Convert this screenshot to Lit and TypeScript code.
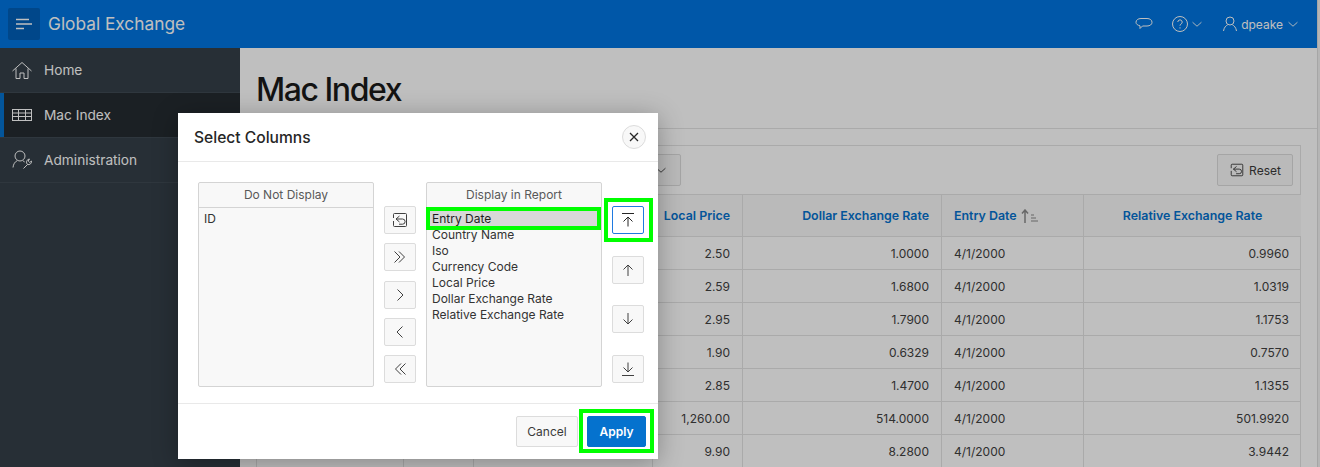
import { LitElement, css, html, svg } from "lit";
import { customElement } from "lit/decorators.js";

const rows = [
    ["2.50", "1.0000", "0.9960"],
    ["2.59", "1.6800", "1.0319"],
    ["2.95", "1.7900", "1.1753"],
    ["1.90", "0.6329", "0.7570"],
    ["2.85", "1.4700", "1.1355"],
    ["1,260.00", "514.0000", "501.9920"],
    ["9.90", "8.2800", "3.9442"],
];

const icon = (body: unknown, size = 18, box = 18) => html`<svg
    width=${size}
    height=${size}
    viewBox="0 0 ${box} ${box}"
    fill="none"
    stroke="currentColor"
    stroke-width="1"
>
    ${body}
</svg>`;

const chevron = svg`<path d="M4 7l5 4.500L14 7" />`;
const resetIcon = svg`<path d="M2.500 7V3.500a1 1 0 0 1 1-1h11a1 1 0 0 1 1 1v11a1 1 0 0 1-1 1h-11a1 1 0 0 1-1-1V10" /><path d="M8.500 5 5 8l3.500 3M5 8h6.500a2.600 2.600 0 0 1 0 5.200H8" />`;
const dblRight = svg`<path d="M3.500 3.500 9 9l-5.500 5.500M8 3.500 13.500 9 8 14.500" />`;
const dblLeft = svg`<path d="M14.500 3.500 9 9l5.500 5.500M10 3.500 4.500 9l5.500 5.500" />`;
const right = svg`<path d="M6.500 3.500 12 9l-5.500 5.500" />`;
const left = svg`<path d="M11.500 3.500 6 9l5.500 5.500" />`;
const top = svg`<path d="M3 2.500h12M9 15.500V6M4.500 10.500 9 6l4.500 4.500" />`;
const up = svg`<path d="M9 15V4M4.500 8.500 9 4l4.500 4.500" />`;
const down = svg`<path d="M9 3v11M4.500 9.500 9 14l4.500-4.500" />`;
const bottom = svg`<path d="M3 15.500h12M9 2.500V12M4.500 7.500 9 12l4.500-4.500" />`;

@customElement("app-root")
export class AppRoot extends LitElement {
    static styles = css`
        :host {
            display: block;
            font-family: Inter, "Liberation Sans", sans-serif;
        }
        .page {
            position: relative;
            width: 1320px;
            height: 467px;
            overflow: hidden;
            background: #fff;
            color: #262626;
            font-size: 12px;
        }
        .topbar {
            height: 48px;
            background: #0075e0;
            color: #fff;
            display: flex;
            align-items: center;
            padding: 0 19px 0 8px;
            box-sizing: border-box;
        }
        .burger {
            width: 32px;
            height: 32px;
            border-radius: 2px;
            background: #005fb8;
            display: flex;
            align-items: center;
            justify-content: center;
        }
        .brand {
            margin-left: 8px;
            padding-bottom: 2px;
            font-size: 17.300px;
            flex: 1;
        }
        .tools {
            display: flex;
            align-items: center;
            font-size: 12px;
        }
        .tools svg {
            display: block;
        }
        .space-18 {
            width: 18px;
        }
        .space-16 {
            width: 16px;
        }
        .space-2 {
            width: 2px;
        }
        .body {
            display: flex;
            height: 419px;
        }
        .side {
            width: 240px;
            flex: none;
            background: #343f48;
            color: #fff;
            font-size: 13.700px;
        }
        .nav {
            height: 44px;
            border-bottom: 1px solid #3f4a53;
            display: flex;
            align-items: center;
            gap: 12px;
            padding-left: 12px;
        }
        .nav.active {
            background: #252b30;
            box-shadow: inset 4px 0 0 #0572ce;
        }
        .main {
            flex: 1;
            min-width: 0;
            display: flex;
            flex-direction: column;
        }
        .title {
            height: 78px;
            padding-top: 2px;
            flex: none;
            border-bottom: 1px solid #e3e3e3;
            padding-left: 16px;
            display: flex;
            align-items: center;
            font-size: 32px;
            font-weight: 500;
            letter-spacing: -1.450px;
            color: #1a1a1a;
        }
        .region {
            margin: 16px 0 0 16px;
            width: 1045px;
            border: 1px solid #e3e3e3;
            border-bottom: 0;
            flex: 1;
            box-sizing: border-box;
        }
        .toolbar {
            height: 48px;
            display: flex;
            align-items: center;
            justify-content: flex-end;
            padding-right: 7px;
            box-sizing: border-box;
            position: relative;
        }
        .btn {
            height: 32px;
            box-sizing: border-box;
            border: 1px solid #dcdcdc;
            background: #f8f8f8;
            border-radius: 2px;
            display: flex;
            align-items: center;
            justify-content: center;
            color: #3a3a3a;
        }
        .reset {
            width: 76px;
            gap: 4px;
        }
        .actions {
            position: absolute;
            left: 340px;
            top: 8px;
            width: 84px;
            justify-content: flex-end;
            padding-right: 11px;
        }
        .grid {
            display: grid;
            grid-template-columns: 146px 70px 179px 90px 199px 142px 218px;
            border-top: 1px solid #e3e3e3;
        }
        .cell {
            height: 33px;
            box-sizing: border-box;
            display: flex;
            align-items: center;
            justify-content: flex-end;
            padding: 0 12px;
            border-bottom: 1px solid #e3e3e3;
            border-left: 1px solid #e3e3e3;
            color: #404040;
            white-space: nowrap;
        }
        .cell:nth-child(7n + 1) {
            border-left: 0;
        }
        .head {
            height: 42px;
            background: #f8f8f8;
            color: #0572ce;
            font-weight: 600;
            font-size: 12.400px;
        }
        .start {
            justify-content: flex-start;
            gap: 4px;
        }
        .center {
            justify-content: center;
        }
        .edge {
            position: absolute;
            right: 0;
            top: 0;
            bottom: 0;
            width: 2px;
            background: #f2f2f2;
            border-left: 1px solid #dedede;
        }
        .shade {
            position: absolute;
            inset: 0;
            background: rgba(0, 0, 0, 0.25);
        }
        .dialog {
            position: absolute;
            left: 178px;
            top: 113px;
            width: 480px;
            height: 346px;
            background: #fff;
            box-shadow: 0 4px 24px rgba(0, 0, 0, 0.3);
            display: flex;
            flex-direction: column;
        }
        .dlg-head {
            height: 49px;
            flex: none;
            box-sizing: border-box;
            border-bottom: 1px solid #e9e9e9;
            padding: 0 12px 0 16px;
            display: flex;
            align-items: center;
            justify-content: space-between;
            font-size: 15.600px;
            font-weight: 500;
            color: #262626;
        }
        .close {
            width: 24px;
            height: 24px;
            border-radius: 50%;
            box-sizing: border-box;
            border: 1px solid #dcdcdc;
            background: #f8f8f8;
            display: flex;
            align-items: center;
            justify-content: center;
            color: #262626;
        }
        .dlg-body {
            flex: 1;
            padding: 20px 20px 0;
            display: flex;
            align-items: flex-start;
        }
        .list {
            width: 176px;
            height: 205px;
            box-sizing: border-box;
            border: 1px solid #d4d4d4;
            border-radius: 2px;
            background: #f8f8f8;
            flex: none;
        }
        .list-head {
            height: 25px;
            box-sizing: border-box;
            padding-bottom: 2px;
            display: flex;
            align-items: center;
            justify-content: center;
            color: #595959;
        }
        .list-head.rule {
            border-bottom: 1px solid #d4d4d4;
        }
        .list-body {
            padding-top: 3px;
        }
        .opt {
            height: 16px;
            line-height: 16px;
            padding-left: 5px;
            color: #333;
        }
        .opt.sel {
            background: #d8d8d8;
            color: #1f1f1f;
            margin-right: 1px;
        }
        .col {
            flex: none;
            width: 32px;
            height: 177px;
            margin-top: 24px;
            display: flex;
            flex-direction: column;
            justify-content: space-between;
        }
        .col.mid {
            margin-left: 10px;
            margin-right: 10px;
        }
        .col.end {
            margin-left: 10px;
        }
        .mini {
            height: 28px;
            width: 32px;
            color: #404040;
        }
        .mini.focus {
            background: #fff;
            border-color: #1f7ae0;
            color: #262626;
        }
        .dlg-foot {
            height: 56px;
            flex: none;
            box-sizing: border-box;
            border-top: 1px solid #e9e9e9;
            display: flex;
            justify-content: flex-end;
            align-items: flex-start;
            gap: 9px;
            padding: 12px 12px 0 0;
        }
        .cancel {
            width: 62px;
            height: 31px;
        }
        .apply {
            width: 59px;
            height: 31px;
            border-color: #0572ce;
            background: #0572ce;
            color: #fff;
            font-weight: 600;
        }
        .mark {
            position: absolute;
            box-sizing: border-box;
            border: 4px solid #00ff00;
        }
    `;

    render() {
        const shown = [
            "Entry Date",
            "Country Name",
            "Iso",
            "Currency Code",
            "Local Price",
            "Dollar Exchange Rate",
            "Relative Exchange Rate",
        ];
        const blank = html`<div class="cell"></div>`;
        return html`
            <div class="page">
                <div class="topbar">
                    <div class="burger">
                        <svg width="16" height="12" viewBox="0 0 16 12" stroke="currentColor" stroke-width="1.500">
                            <path d="M0 1.500h13M0 6h16M0 10.500h8" />
                        </svg>
                    </div>
                    <div class="brand">Global Exchange</div>
                    <div class="tools">
                        ${icon(svg`<path d="M6 3.500h6c3 0 5 1.600 5 3.800s-2 3.700-5 3.700H7.500L5 13.500V10.800C2.800 10.300 1 9.200 1 7.300 1 5.100 3 3.500 6 3.500z" />`)}
                        <span class="space-18"></span>
                        ${icon(svg`<circle cx="9" cy="9" r="7.500" /><path d="M6.800 7a2.200 2.200 0 1 1 3.300 2c-.8.500-1.100.900-1.100 1.700" /><path d="M9 12.300v1.200" />`)}
                        ${icon(chevron, 16, 18)}
                        <span class="space-16"></span>
                        ${icon(svg`<circle cx="9" cy="6" r="4" /><path d="M2.500 16c.5-3.500 2.500-5.500 4-6M15.500 16c-.5-3.500-2.500-5.500-4-6" />`)}
                        <span class="space-2"></span>
                        <span>dpeake</span>
                        <span class="space-2"></span>
                        ${icon(chevron, 16, 18)}
                    </div>
                </div>
                <div class="body">
                    <div class="side">
                        <div class="nav">
                            ${icon(svg`<path d="M.5 11 10 2.500l9.500 8.500M4 8.500V18.500h4v-5.500h4v5.500h4V8.500" />`, 20, 20)}<span>Home</span>
                        </div>
                        <div class="nav active">
                            ${icon(svg`<rect x=".5" y="4.500" width="19" height="11" /><path d="M.5 8h19M.5 11.500h19M6.500 4.500v11M13.500 4.500v11" />`, 20, 20)}<span>Mac Index</span>
                        </div>
                        <div class="nav">
                            ${icon(svg`<circle cx="8" cy="6" r="5" /><path d="M1 17.500c.3-3.300 2-5.800 4-6.700M11 10.800c.6.300 1.200.7 1.700 1.200M11.500 18.500l4-4" /><path d="M15.500 14.500a3.200 3.200 0 0 1 2-5.500l-1.300 2 1.400 1.400 2-1.300a3.200 3.200 0 0 1-4.100 3.400z" />`, 20, 20)}<span>Administration</span>
                        </div>
                    </div>
                    <div class="main">
                        <div class="title">Mac Index</div>
                        <div class="region">
                            <div class="toolbar">
                                <div class="btn actions">${icon(chevron, 16, 18)}</div>
                                <div class="btn reset">${icon(resetIcon, 16)}<span>Reset</span></div>
                            </div>
                            <div class="grid">
                                <div class="cell head"></div>
                                <div class="cell head"></div>
                                <div class="cell head"></div>
                                <div class="cell head">Local Price</div>
                                <div class="cell head">Dollar Exchange Rate</div>
                                <div class="cell head start">
                                    Entry Date
                                    <svg width="18" height="14" viewBox="0 0 18 14" fill="none" stroke="#8a8a8a">
                                        <path d="M4 14V1M1 4.500 4 1l3 3.500" stroke-width="1.500" />
                                        <path d="M10 6h3M10 9h5M10 12h7" />
                                    </svg>
                                </div>
                                <div class="cell head center">Relative Exchange Rate</div>
                                ${rows.map(
                                    (r) => html`
                                        ${blank}${blank}${blank}
                                        <div class="cell">${r[0]}</div>
                                        <div class="cell">${r[1]}</div>
                                        <div class="cell start">4/1/2000</div>
                                        <div class="cell">${r[2]}</div>
                                    `,
                                )}
                            </div>
                        </div>
                    </div>
                </div>
                <div class="edge"></div>
                <div class="shade"></div>
                <div class="dialog">
                    <div class="dlg-head">
                        <span>Select Columns</span>
                        <div class="close">
                            <svg width="10" height="10" viewBox="0 0 10 10" stroke="currentColor" stroke-width="1.300">
                                <path d="M1 1l8 8M9 1 1 9" />
                            </svg>
                        </div>
                    </div>
                    <div class="dlg-body">
                        <div class="list">
                            <div class="list-head rule">Do Not Display</div>
                            <div class="list-body"><div class="opt">ID</div></div>
                        </div>
                        <div class="col mid">
                            ${[resetIcon, dblRight, right, left, dblLeft].map(
                                (i) => html`<div class="btn mini">${icon(i)}</div>`,
                            )}
                        </div>
                        <div class="list">
                            <div class="list-head">Display in Report</div>
                            <div class="list-body">
                                ${shown.map(
                                    (s, i) => html`<div class="opt ${i === 0 ? "sel" : ""}">${s}</div>`,
                                )}
                            </div>
                        </div>
                        <div class="col end">
                            ${[top, up, down, bottom].map(
                                (i, n) => html`<div class="btn mini ${n === 0 ? "focus" : ""}">${icon(i)}</div>`,
                            )}
                        </div>
                    </div>
                    <div class="dlg-foot">
                        <div class="btn cancel">Cancel</div>
                        <div class="btn apply">Apply</div>
                    </div>
                </div>
                <div class="mark" style="left:426px;top:207px;width:175px;height:23px"></div>
                <div class="mark" style="left:604px;top:198px;width:49px;height:44px"></div>
                <div class="mark" style="left:579px;top:409px;width:75px;height:44px"></div>
            </div>
        `;
    }
}
